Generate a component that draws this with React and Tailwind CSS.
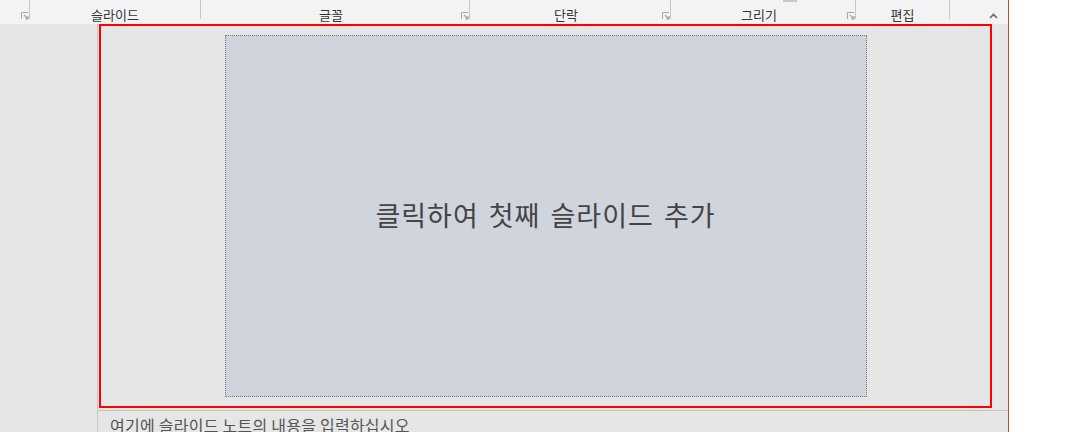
const groups = [
  { label: '', width: 30, launcher: true },
  { label: '슬라이드', width: 171 },
  { label: '글꼴', width: 269, launcher: true },
  { label: '단락', width: 201, launcher: true },
  { label: '그리기', width: 185, launcher: true, nub: true },
  { label: '편집', width: 94 },
];

function Launcher() {
  return (
    <svg width="8" height="8" viewBox="0 0 8 8" className="absolute right-[1px] bottom-[4px]">
      <path d="M0.5 7V0.5H7" fill="none" stroke="#a6a6a6" strokeWidth="1" />
      <path d="M3 3L6.5 6.5M4 7H7V4" fill="none" stroke="#a6a6a6" strokeWidth="1.2" />
    </svg>
  );
}

export default function App() {
  return (
    <div className="flex w-[1084px] h-[432px] overflow-hidden bg-white" style={{ fontFamily: '"Noto Sans CJK KR", "Noto Sans", sans-serif' }}>
      <div className="w-[1008px] flex flex-col bg-[#e6e6e6]">
        <div className="h-[24px] flex bg-[#f3f3f3] shrink-0">
          {groups.map((g, i) => (
            <div key={i} className="relative h-full flex" style={{ width: g.width }}>
              <div className={`flex-1 flex items-end justify-center text-[13px] leading-[18px] text-[#333] ${g.launcher ? 'pr-[8px]' : ''}`}>
                {g.label}
              </div>
              {g.launcher && <Launcher />}
              {g.nub && <div className="absolute top-0 left-[112px] w-[14px] h-[2px] bg-[#c8c8c8]" />}
              <div className="w-px h-[19px] bg-[#c6c6c6] self-start" />
            </div>
          ))}
          <div className="flex-1 flex items-end justify-end pr-[10px] pb-[5px]">
            <svg width="9" height="6" viewBox="0 0 9 6">
              <path d="M1 5L4.5 1.5L8 5" fill="none" stroke="#666" strokeWidth="1.6" />
            </svg>
          </div>
        </div>
        <div className="flex flex-1 min-h-0">
          <div className="w-[98px] border-r border-[#c8c8c8] bg-[#e6e6e6]" />
          <div className="flex-1 flex flex-col">
            <div className="h-[384px] w-[893px] ml-[1px] border-2 border-[#ff0000] flex items-center justify-center shrink-0">
              <div className="w-[642px] h-[362px] border border-dotted border-[#7a7a7a] bg-[#d0d4dc] flex items-center justify-center">
                <span className="text-[27px] text-[#444] tracking-[1px] [word-spacing:3px] -mt-[2px]">클릭하여 첫째 슬라이드 추가</span>
              </div>
            </div>
            <div className="mt-[2px] border-t border-[#c4c4c4] pl-[12px] pt-[4px] text-[16px] leading-[20px] tracking-[0.25px] text-[#555]">
              여기에 슬라이드 노트의 내용을 입력하십시오
            </div>
          </div>
        </div>
      </div>
      <div className="w-px bg-[#d24726]" />
    </div>
  );
}
